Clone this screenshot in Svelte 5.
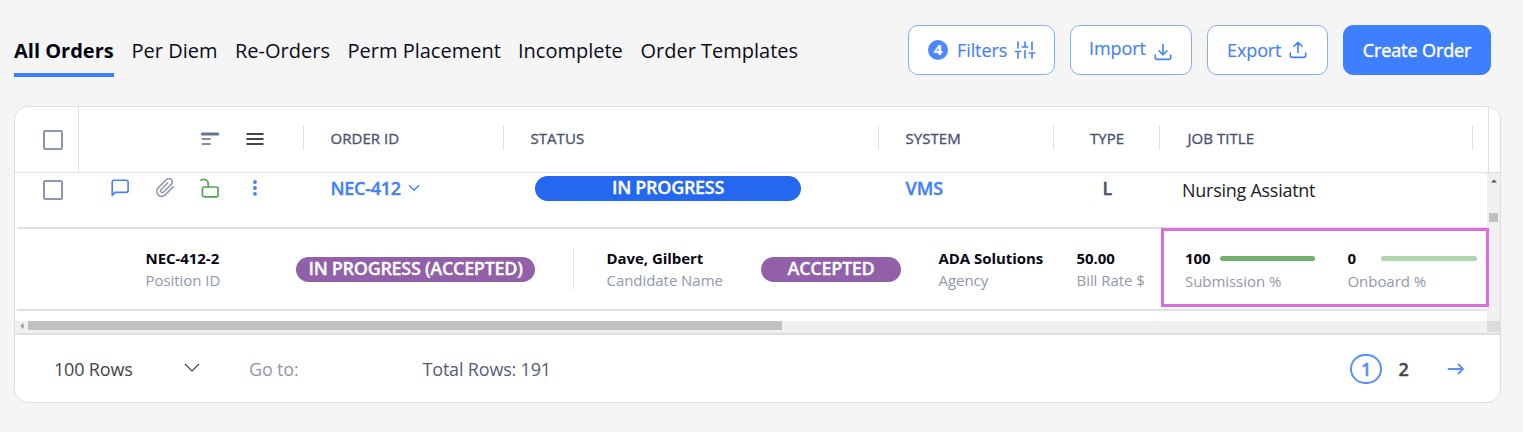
<script>
  const tabs = [
    { label: 'All Orders', width: 100 },
    { label: 'Per Diem', width: 86 },
    { label: 'Re-Orders', width: 95 },
    { label: 'Perm Placement', width: 153 },
    { label: 'Incomplete', width: 105 },
    { label: 'Order Templates', width: 158 }
  ];
  let active = $state('All Orders');
</script>

<main>
  <div class="topbar">
    <nav>
      {#each tabs as tab}
        <button class="tab" class:active={active === tab.label} style="width:{tab.width}px" onclick={() => (active = tab.label)}>{tab.label}</button>
      {/each}
    </nav>
    <div class="actions">
      <button class="btn filters">
        <span class="count">4</span>
        <span class="flabel">Filters</span>
        <svg width="22" height="20" viewBox="0 0 22 20" fill="none" stroke="#4480fb" stroke-width="1.6" stroke-linecap="round">
          <path d="M4 2v6M4 11.500V18M1.300 11.500h5.400M11 2v5M11 10.500V18M8.300 7h5.400M18 2v8M18 13v5M15.300 13h5.400" />
        </svg>
      </button>
      <button class="btn import">
        <span class="ilabel">Import</span>
        <svg width="18" height="18" viewBox="0 0 18 18" fill="none" stroke="#4480fb" stroke-width="1.6" stroke-linecap="round" stroke-linejoin="round">
          <path d="M9 1.500v10M5 7.800l4 4 4-4M1.300 12v2.500q0 1.900 1.900 1.900h11.600q1.900 0 1.900-1.900V12" />
        </svg>
      </button>
      <button class="btn export">
        <span class="elabel">Export</span>
        <svg width="18" height="18" viewBox="0 0 18 18" fill="none" stroke="#4480fb" stroke-width="1.6" stroke-linecap="round" stroke-linejoin="round">
          <path d="M9 11.500v-10M5 5.300l4-4 4 4M1.300 12v2.500q0 1.900 1.900 1.900h11.600q1.900 0 1.900-1.900V12" />
        </svg>
      </button>
      <button class="btn primary">Create Order</button>
    </div>
  </div>

  <section class="card">
    <div class="head">
      <div class="select"><span class="check"></span></div>
      <div class="cell tools">
        <svg width="20" height="14" viewBox="0 0 20 14"><path d="M2.300 2h15.400" stroke="#68738f" stroke-width="3" stroke-linecap="round" /><path d="M2.500 7h7.500M2.500 12h7.500" stroke="#8390a8" stroke-width="2" stroke-linecap="round" /></svg>
        <svg width="18" height="14" viewBox="0 0 18 14"><path d="M.5 2h17M.5 7h17M.5 12h17" stroke="#444" stroke-width="2" /></svg>
      </div>
      <div class="cell order">ORDER ID</div>
      <div class="cell status">STATUS</div>
      <div class="cell system">SYSTEM</div>
      <div class="cell type">TYPE</div>
      <div class="cell title">JOB TITLE</div>
      <div class="endcap"></div>
    </div>

    <div class="viewport">
      <div class="rows">
        <div class="row">
          <div class="rselect"><span class="check"></span></div>
          <div class="ricons">
            <svg width="18" height="18" viewBox="0 0 18 18" fill="none" stroke="#4480fb" stroke-width="1.600" stroke-linejoin="round"><path d="M1.200 16.300V3q0-1.800 1.800-1.800h12.300q1.800 0 1.800 1.800v8.600q0 1.800-1.800 1.800H4.200z" /></svg>
            <svg width="20" height="20" viewBox="0 0 24 24" fill="none" stroke="#959bb0" stroke-width="2" stroke-linecap="round" stroke-linejoin="round"><path d="m21.800 10.700-9.600 9.600a6 6 0 0 1-8.500-8.500l10-10a4.100 4.100 0 0 1 5.800 5.800l-9.200 9.200a2.100 2.100 0 0 1-3-3l7.800-7.800" /></svg>
            <svg width="20" height="20" viewBox="0 0 20 20" fill="none" stroke="#50a750" stroke-width="1.700" stroke-linecap="round"><rect x="2.400" y="9" width="15.700" height="9.800" rx="1.800" /><path d="M8.200 9V5.500C8.200 1.200 3 .8 1 2.300" /></svg>
            <svg width="6" height="18" viewBox="0 0 6 18" fill="#4480fb"><circle cx="3" cy="3" r="1.900" /><circle cx="3" cy="9" r="1.900" /><circle cx="3" cy="14.800" r="1.900" /></svg>
          </div>
          <div class="rid">NEC-412
            <svg width="12" height="8" viewBox="0 0 12 8" fill="none" stroke="#4480fb" stroke-width="1.400"><path d="m1 1.300 5 5 5-5" /></svg>
          </div>
          <div class="rstatus"><span class="pill blue">IN PROGRESS</span></div>
          <div class="rsystem">VMS</div>
          <div class="rtype">L</div>
          <div class="rtitle">Nursing Assiatnt</div>
        </div>

        <div class="sub">
          <div class="info position"><b>NEC-412-2</b><span>Position ID</span></div>
          <div class="pillbox"><span class="pill purple wide">IN PROGRESS (ACCEPTED)</span></div>
          <div class="info candidate"><b>Dave, Gilbert</b><span>Candidate Name</span></div>
          <div class="pillbox"><span class="pill purple">ACCEPTED</span></div>
          <div class="info agency"><b>ADA Solutions</b><span>Agency</span></div>
          <div class="info rate"><b>50.00</b><span>Bill Rate $</span></div>
          <div class="progress">
            <div class="metric"><div class="mline"><b>100</b><i class="bar full"></i></div><span>Submission %</span></div>
            <div class="metric"><div class="mline"><b>0</b><i class="bar"></i></div><span>Onboard %</span></div>
          </div>
        </div>
      </div>
      <div class="vscroll">
        <svg width="6" height="4" viewBox="0 0 6 4"><path d="M0 3.500 3 .5l3 3z" fill="#505050" /></svg>
        <span></span>
      </div>
    </div>

    <div class="hscroll">
      <svg width="4" height="6" viewBox="0 0 4 6"><path d="M3.500 0 .5 3l3 3z" fill="#8c8c8c" /></svg>
      <span class="thumb"></span>
      <span class="corner"></span>
    </div>

    <footer>
      <span class="count-rows">100 Rows</span>
      <svg class="chev" width="16" height="10" viewBox="0 0 16 10" fill="none" stroke="#444" stroke-width="1.200"><path d="m1 1 7 7 7-7" /></svg>
      <span class="goto">Go to:</span>
      <span class="total">Total Rows: 191</span>
      <span class="page current">1</span>
      <span class="page">2</span>
      <svg class="next" width="18" height="14" viewBox="0 0 18 14" fill="none" stroke="#568ffc" stroke-width="1.800" stroke-linecap="round" stroke-linejoin="round"><path d="M1.500 7h14.500M11.500 2.500 16 7l-4.500 4.500" /></svg>
    </footer>
  </section>
</main>

<style>
  :global(body) { margin: 0; background: #f5f5f5; }
  main, button { font-family: 'Open Sans', 'Noto Sans', sans-serif; }
  main { width: 1523px; height: 432px; overflow: hidden; background: #f5f5f5; box-sizing: border-box; padding: 25px 22px 0 14px; }
  main *, main { box-sizing: border-box; }
  svg { display: block; flex: none; }
  button { cursor: pointer; }
  .topbar { display: flex; justify-content: space-between; height: 81px; padding-right: 10px; }
  nav { display: flex; gap: 17.500px; }
  .tab { height: 52px; border: 0; border-bottom: 4px solid transparent; background: none; font-size: 20px; line-height: 48px; white-space: nowrap; color: #0a0a18; text-align: left; padding: 2px 0 0; }
  .tab.active { font-weight: 700; border-color: #3d7fff; color: #050510; }
  .actions { display: flex; gap: 15px; }
  .btn { height: 50px; border: 1px solid #84aefc; border-radius: 10px; background: #fff; color: #4480fb; font-size: 18px; display: flex; align-items: center; padding: 0; white-space: nowrap; letter-spacing: -0.100px; -webkit-text-stroke: 0.150px currentColor; }
  .filters { width: 147px; padding-left: 19px; }
  .count { width: 20px; height: 20px; border-radius: 50%; background: #4c88fd; color: #fff; font-size: 15px; font-weight: 700; line-height: 19px; text-align: center; }
  .flabel { width: 57px; margin-left: 9px; text-align: left; }
  .import { width: 122px; padding-left: 18px; }
  .ilabel { width: 65px; padding-bottom: 5px; text-align: left; }
  .import svg { margin-top: 3px; }
  .export { width: 121px; padding-left: 19px; }
  .elabel { width: 62px; text-align: left; }
  .primary { width: 148px; background: #3d7fff; border-color: #3d7fff; color: #fff; justify-content: center; -webkit-text-stroke-width: 0.450px; }

  .card { width: 1487px; height: 297px; border: 1px solid #dedede; border-radius: 14px; background: #fff; overflow: hidden; }
  .head { display: flex; align-items: center; height: 66px; border-bottom: 1px solid #dedede; font-size: 15px; color: #4a5270; -webkit-text-stroke: 0.350px currentColor; }
  .select { width: 64px; height: 65px; padding: 23px 0 0 28px; border-right: 1px solid #dedede; }
  .check { display: block; width: 20px; height: 20px; border: 2px solid #8f97ad; border-radius: 2px; }
  .cell { height: 25px; line-height: 26px; border-right: 1px solid #dedede; flex: none; margin-top: -4px; white-space: nowrap; letter-spacing: 0.050px; }
  .tools { width: 225px; display: flex; align-items: center; gap: 26px; padding: 3px 0 0 121px; }
  .order { width: 200px; padding-left: 26.500px; }
  .status { width: 375px; padding-left: 26.500px; }
  .system { width: 175px; padding-left: 26.500px; }
  .type { width: 106px; text-align: center; padding-left: 1px; }
  .title { width: 313px; padding-left: 27.500px; }
  .endcap { width: 16px; height: 65px; border-right: 1px solid #dedede; }

  .viewport { display: flex; height: 148px; }
  .rows { width: 1472px; padding-left: 2px; position: relative; }
  .row { display: flex; height: 56px; border-bottom: 2px solid #e1e1e1; font-size: 18px; line-height: 30px; white-space: nowrap; }
  .rselect { width: 92px; padding: 7px 0 0 26px; }
  .ricons { width: 221.500px; display: flex; align-items: center; height: 30px; padding-left: 2px; }
  .ricons svg:nth-child(2) { margin-left: 26px; }
  .ricons svg:nth-child(3) { margin-left: 25px; }
  .ricons svg:nth-child(4) { margin-left: 32px; }
  .rid { width: 204.500px; color: #4480fb; font-weight: 600; display: flex; align-items: center; gap: 7.500px; height: 30px; letter-spacing: -0.300px; -webkit-text-stroke: 0.350px currentColor; }
  .rstatus { width: 370px; padding-top: 3px; }
  .pill { display: block; height: 25px; border-radius: 13px; color: #fff; font-size: 18px; font-weight: 600; line-height: 23px; text-align: center; white-space: nowrap; letter-spacing: -0.300px; -webkit-text-stroke: 0.300px currentColor; }
  .blue { width: 266px; background: #2468f0; }
  .rsystem { width: 146px; color: #4480fb; font-weight: 600; -webkit-text-stroke: 0.350px currentColor; padding-left: .5px; }
  .rtype { width: 113px; text-align: center; color: #4a4f6c; font-weight: 600; -webkit-text-stroke: 0.350px currentColor; }
  .rtitle { color: #222; line-height: 34px; padding-left: 18px; letter-spacing: -0.270px; }

  .sub { display: flex; height: 82px; border-bottom: 2px solid #e1e1e1; font-size: 15px; white-space: nowrap; }
  .info { padding-top: 18px; display: flex; flex-direction: column; line-height: 22px; }
  .sub b { color: #080814; font-weight: 700; letter-spacing: -0.050px; }
  .sub .info > span, .metric > span { color: #9298aa; letter-spacing: -0.050px; }
  .position { width: 279px; padding-left: 128.500px; }
  .pillbox { padding-top: 28px; }
  .purple { width: 140px; background: #9160a8; }
  .wide { width: 239px; }
  .candidate { width: 188px; height: 42px; margin: 19px 0 0 38px; padding: 0 0 0 32.500px; border-left: 1px solid #e5e5ea; }
  .candidate b { margin-top: -1px; }
  .agency { width: 176px; padding-left: 37.500px; }
  .rate { width: 84px; margin-left: -.5px; }
  .progress { position: absolute; left: 1146px; top: 55px; width: 328px; height: 79px; border: 3px solid #e06bdb; padding: 16px 0 0 21px; display: flex; z-index: 1; }
  .metric { width: 162.500px; line-height: 24px; }
  .mline { display: flex; align-items: center; height: 22px; line-height: 22px; }
  .mline b { width: 35px; }
  .metric:last-child { width: 134px; }
  .metric:last-child b { width: 33.500px; }
  .bar { width: 96px; height: 5px; border-radius: 3px; background: #afd6af; }
  .full { width: 95px; background: #70b16e; }
  .vscroll { width: 13px; background: #f0f0f0; display: flex; flex-direction: column; align-items: center; padding-top: 6px; flex: none; }
  .vscroll span { width: 9px; height: 9px; background: #c1c1c1; margin-top: 30px; }
  .hscroll { height: 14px; background: #f0f0f0; border-bottom: 2px solid #dedede; display: flex; }
  .hscroll svg { margin: 1.500px 4px 0 5px; }
  .thumb { width: 754px; height: 9px; background: #c1c1c1; }
  .corner { width: 13px; height: 11px; background: #dcdcdc; margin-left: auto; }
  footer { display: flex; align-items: center; height: 67px; font-size: 18px; padding-left: 39px; white-space: nowrap; letter-spacing: -0.180px; }
  .count-rows { width: 130px; color: #444; }
  .chev { margin-top: -2px; }
  .goto { width: 173.500px; margin-left: 49px; color: #9298aa; }
  .total { width: 927.500px; color: #555d72; }
  .page { width: 32px; height: 30px; text-align: center; line-height: 30px; color: #44444f; font-weight: 600; margin-left: 5.500px; -webkit-text-stroke: 0.350px currentColor; }
  .current { margin-left: 0; line-height: 26px; border: 2px solid #568ffc; border-radius: 15px; color: #568ffc; }
  .next { margin-left: 27px; }
</style>
